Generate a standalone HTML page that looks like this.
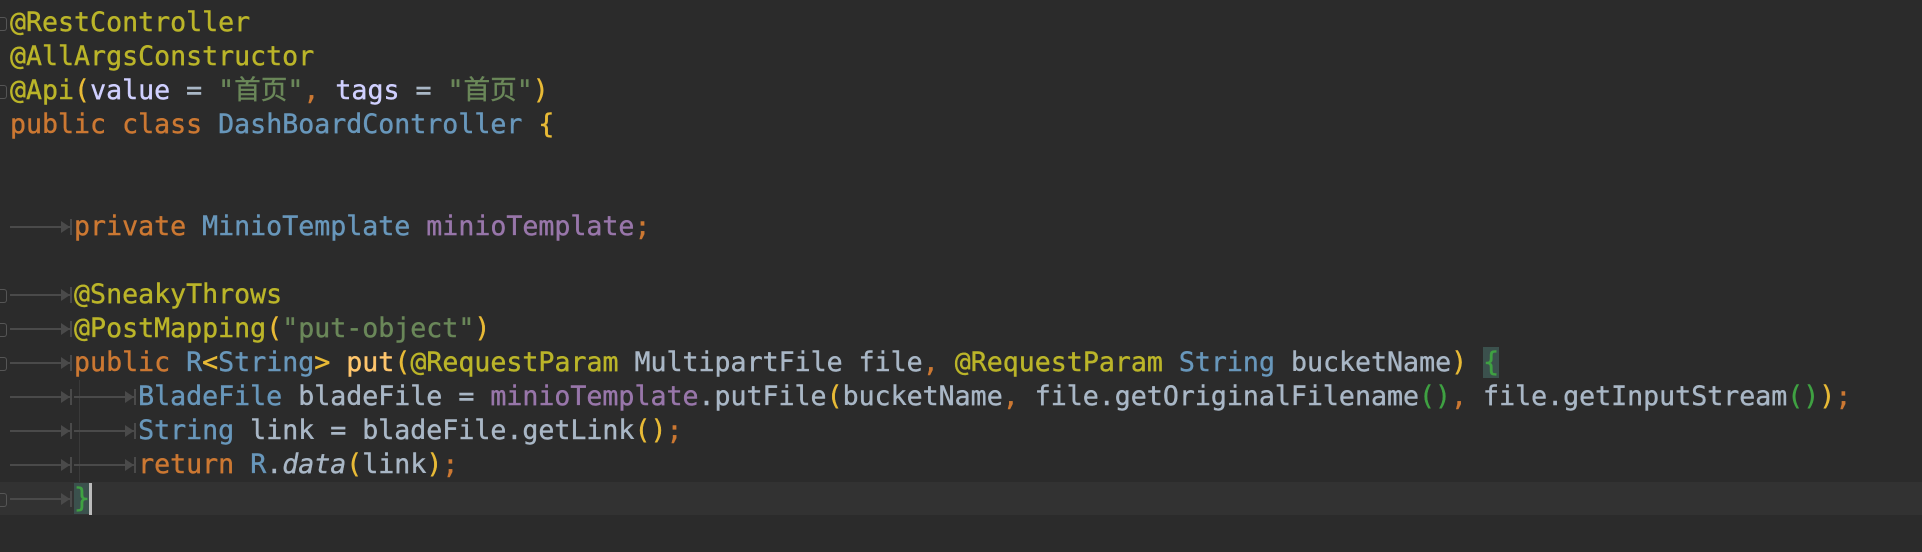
<!DOCTYPE html>
<html><head><meta charset="utf-8"><style>
html,body{margin:0;padding:0;background:#2b2b2b;width:1922px;height:552px;overflow:hidden}
.cur{position:absolute;left:0;top:482px;width:1922px;height:33px;background:#323232}
pre{position:absolute;left:10px;top:6px;margin:0;font-family:"DejaVu Sans Mono","Liberation Mono","Noto Sans CJK SC",monospace;font-size:26.6px;line-height:34px;color:#a9b7c6;white-space:pre;-webkit-text-stroke:0.4px currentColor}
.a{color:#bbb529}.k{color:#cc7832}.c{color:#6897bb}.s{color:#6a8759}.f{color:#9876aa}.p{color:#d0d0ff}.m{color:#ffc66d}.y{color:#e8ba36}.g{color:#3fa142}.i{font-style:italic}
.hb{background:#3b514d;color:#3fa142}
.arrow{position:absolute;height:2px;background:#4a4a4a}
.arrow::after{content:"";position:absolute;right:2px;top:-5px;border-left:9px solid #4a4a4a;border-top:6px solid transparent;border-bottom:6px solid transparent}
.arrow::before{content:"";position:absolute;right:0;top:-7px;width:2px;height:16px;background:#4a4a4a}
.fold{position:absolute;left:0;width:6px;height:12px;border:1px solid #555;border-left:none;border-radius:0 3px 3px 0}
.guide{position:absolute;left:79px;top:380px;width:1px;height:102px;background:#3a3a3a}
.caret{position:absolute;left:89px;top:483px;width:3px;height:32px;background:#bbbbbb}
</style></head><body>
<div class="cur"></div>
<div class="guide"></div>
<div class="fold" style="top:17px"></div>
<div class="fold" style="top:85px"></div>
<div class="fold" style="top:289px"></div>
<div class="fold" style="top:323px"></div>
<div class="fold" style="top:357px"></div>
<div class="fold" style="top:493px"></div>
<div class="arrow" style="left:10px;top:226px;width:62px"></div>
<div class="arrow" style="left:10px;top:294px;width:62px"></div>
<div class="arrow" style="left:10px;top:328px;width:62px"></div>
<div class="arrow" style="left:10px;top:362px;width:62px"></div>
<div class="arrow" style="left:10px;top:396px;width:62px"></div>
<div class="arrow" style="left:74px;top:396px;width:62px"></div>
<div class="arrow" style="left:10px;top:430px;width:62px"></div>
<div class="arrow" style="left:74px;top:430px;width:62px"></div>
<div class="arrow" style="left:10px;top:464px;width:62px"></div>
<div class="arrow" style="left:74px;top:464px;width:62px"></div>
<div class="arrow" style="left:10px;top:498px;width:62px"></div>
<pre><span class="a">@RestController</span>
<span class="a">@AllArgsConstructor</span>
<span class="a">@Api</span><span class="y">(</span><span class="p">value</span> = <span class="s">"首页"</span><span class="k">,</span> <span class="p">tags</span> = <span class="s">"首页"</span><span class="y">)</span>
<span class="k">public class</span> <span class="c">DashBoardController</span> <span class="y">{</span>


    <span class="k">private</span> <span class="c">MinioTemplate</span> <span class="f">minioTemplate</span><span class="k">;</span>

    <span class="a">@SneakyThrows</span>
    <span class="a">@PostMapping</span><span class="y">(</span><span class="s">"put-object"</span><span class="y">)</span>
    <span class="k">public</span> <span class="c">R</span><span class="y">&lt;</span><span class="c">String</span><span class="y">&gt;</span> <span class="m">put</span><span class="y">(</span><span class="a">@RequestParam</span> MultipartFile file<span class="k">,</span> <span class="a">@RequestParam</span> <span class="c">String</span> bucketName<span class="y">)</span> <span class="hb">{</span>
        <span class="c">BladeFile</span> bladeFile = <span class="f">minioTemplate</span>.putFile<span class="y">(</span>bucketName<span class="k">,</span> file.getOriginalFilename<span class="g">()</span><span class="k">,</span> file.getInputStream<span class="g">()</span><span class="y">)</span><span class="k">;</span>
        <span class="c">String</span> link = bladeFile.getLink<span class="y">()</span><span class="k">;</span>
        <span class="k">return</span> <span class="c">R</span>.<span class="i">data</span><span class="y">(</span>link<span class="y">)</span><span class="k">;</span>
    <span class="hb">}</span></pre>
<div class="caret"></div>
</body></html>
